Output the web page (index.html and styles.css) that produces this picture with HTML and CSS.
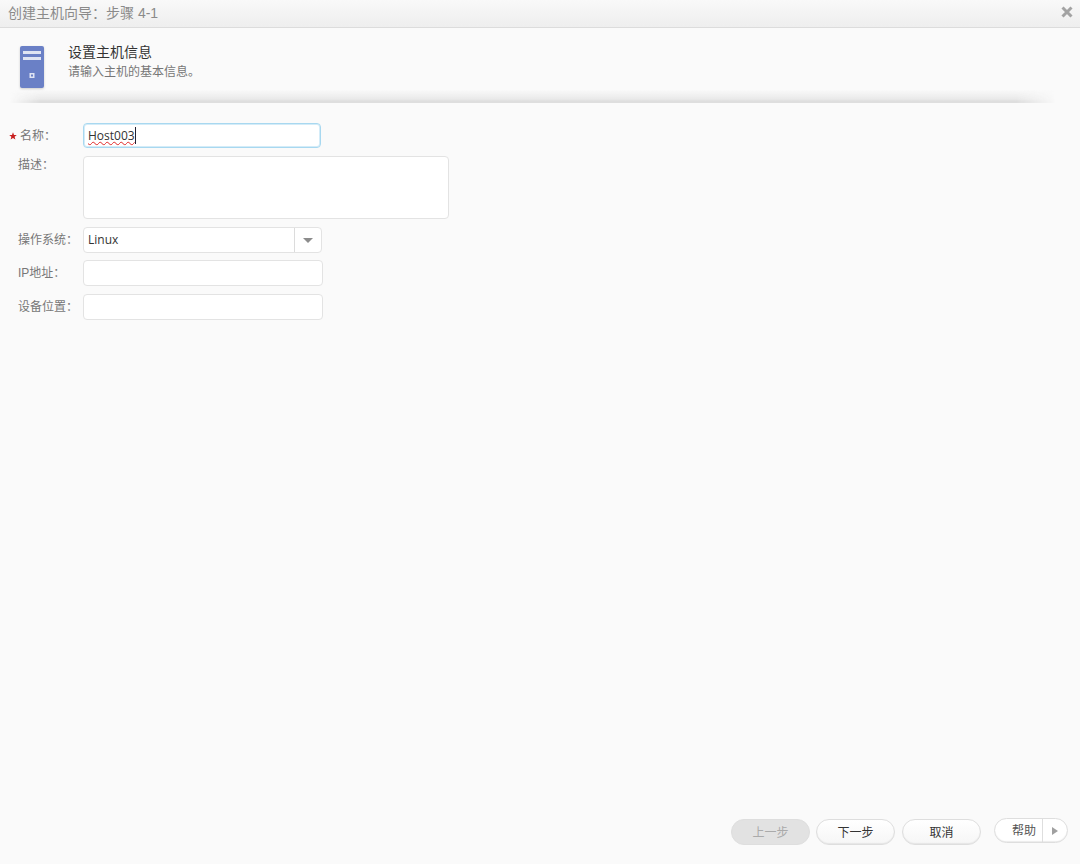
FILE: index.html
```html
<!DOCTYPE html>
<html lang="zh-CN">
<head>
<meta charset="utf-8">
<title>创建主机向导</title>
<link rel="stylesheet" href="styles.css">
</head>
<body>
<div class="dialog">
  <div class="titlebar">
    <span class="title-text">创建主机向导：步骤 4-1</span>
    <svg class="close" width="12" height="12" viewBox="0 0 12 12"><path d="M1.5 1.5L10.5 10.5M10.5 1.5L1.5 10.5" stroke="#a3a3a3" stroke-width="3"/></svg>
  </div>
  <div class="head">
    <svg class="host-icon" width="26" height="44" viewBox="0 0 26 44">
      <rect x="1" y="1" width="24" height="42" rx="2" fill="#6a80c6"/>
      <rect x="4" y="6" width="18" height="3" fill="#dfe4f3"/>
      <rect x="4" y="12" width="18" height="3" fill="#dfe4f3"/>
      <rect x="10.5" y="28" width="5" height="5" fill="#dfe4f3"/>
      <rect x="12" y="29.5" width="2" height="2" fill="#6a80c6"/>
    </svg>
    <div class="head-text">
      <div class="head-title">设置主机信息</div>
      <div class="head-sub">请输入主机的基本信息。</div>
    </div>
  </div>
  <div class="divider"></div>
  <form class="form">
    <div class="row row-name">
      <svg class="star" width="8" height="8" viewBox="0 0 8 8"><path d="M4 0.3L5 3H7.8L5.6 4.8L6.4 7.6L4 6L1.6 7.6L2.4 4.8L0.2 3H3Z" fill="#c81e1e"/></svg>
      <label class="label label-name">名称：</label>
      <div class="control control-name"><span class="misspelt">Host003</span><span class="caret"></span></div>
    </div>
    <div class="row row-desc">
      <label class="label">描述：</label>
      <div class="control control-desc"></div>
    </div>
    <div class="row row-os">
      <label class="label">操作系统：</label>
      <div class="control control-os">
        <span class="os-value">Linux</span>
        <span class="os-arrow"><span class="arrow-down"></span></span>
      </div>
    </div>
    <div class="row row-ip">
      <label class="label">IP地址：</label>
      <div class="control control-wide"></div>
    </div>
    <div class="row row-loc">
      <label class="label">设备位置：</label>
      <div class="control control-wide"></div>
    </div>
  </form>
  <div class="footer">
    <button type="button" class="btn btn-disabled">上一步</button>
    <button type="button" class="btn">下一步</button>
    <button type="button" class="btn">取消</button>
    <div class="help">
      <span class="help-label">帮助</span>
      <span class="help-more"><span class="arrow-right"></span></span>
    </div>
  </div>
</div>
</body>
</html>
```
FILE: styles.css
```css
* { box-sizing: border-box; }
html, body { margin: 0; padding: 0; }
body {
  width: 1080px;
  height: 864px;
  overflow: hidden;
  background: #fafafa;
  font-family: "Liberation Sans", "Noto Sans CJK SC", sans-serif;
  font-size: 12px;
  color: #666;
}
.dialog { height: 864px; display: flex; flex-direction: column; background: #fafafa; }
.titlebar {
  height: 28px;
  flex: none;
  display: flex;
  align-items: center;
  justify-content: space-between;
  padding: 0 7px 4px 8px;
  background: linear-gradient(#f9f9f9, #eeeeee);
  border-bottom: 1px solid #dcdcdc;
}
.title-text { font-size: 14px; color: #8a8a8a; }
.head { height: 62px; flex: none; display: flex; padding: 17px 0 0 19px; }
.host-icon { flex: none; filter: drop-shadow(0 1px 1px rgba(0,0,0,.18)); }
.head-text { margin-left: 23px; margin-top: -1px; }
.head-title { font-size: 14px; line-height: 16px; color: #333; }
.head-sub { font-size: 12px; line-height: 16px; margin-top: 4px; color: #777; }
.divider {
  height: 13px;
  flex: none;
  margin: 0 24px 0 10px;
  background: linear-gradient(rgba(222,222,222,0) 0%, #e9e9e9 70%, #dedede 85%, #dedede 100%);
  -webkit-mask-image: linear-gradient(90deg, transparent 0, #000 30px, #000 calc(100% - 40px), transparent 100%);
  mask-image: linear-gradient(90deg, transparent 0, #000 30px, #000 calc(100% - 40px), transparent 100%);
}
.form { flex: 1; padding: 20px 0 0 0; }
.row { display: flex; align-items: center; position: relative; padding-left: 18px; }
.row-name { height: 25px; margin-bottom: 8px; }
.row-desc { height: 63px; margin-bottom: 8px; align-items: flex-start; }
.row-desc .label { padding-top: 1px; }
.row-os { height: 26px; margin-bottom: 7px; }
.row-ip { height: 26px; margin-bottom: 8px; }
.row-loc { height: 26px; }
.star { position: absolute; left: 9px; top: 9px; }
.label { width: 65px; flex: none; font-size: 12px; color: #777; line-height: 16px; }
.label-name { padding-left: 2px; }
.control {
  background: #fff;
  border: 1px solid #e3e3e3;
  border-radius: 4px;
  color: #333;
  font-family: "Open Sans", "Liberation Sans", sans-serif;
  font-size: 12px;
}
.control-name {
  width: 238px;
  height: 25px;
  display: flex;
  align-items: center;
  padding: 0 0 1px 4px;
  border-color: #a8d8f0;
  box-shadow: inset 0 0 0 1px #d4ecf8;
}
.misspelt { text-decoration: underline wavy #e02828 1px; text-underline-offset: 1px; }
.caret { width: 1px; height: 17px; background: #223; }
.control-desc { width: 366px; height: 63px; }
.control-os {
  width: 239px;
  height: 26px;
  display: flex;
  align-items: center;
  justify-content: space-between;
}
.os-value { padding-left: 4px; padding-bottom: 1px; }
.os-arrow {
  width: 27px;
  height: 24px;
  border-left: 1px solid #dcdcdc;
  display: flex;
  align-items: center;
  justify-content: center;
}
.arrow-down { width: 0; height: 0; border: 5px solid transparent; border-top: 5px solid #8c8c8c; border-bottom: 0; }
.control-wide { width: 240px; height: 26px; }
.footer {
  flex: none;
  height: 45px;
  display: flex;
  align-items: flex-start;
  padding-left: 731px;
}
.btn {
  width: 79px;
  height: 26px;
  margin-right: 7px;
  padding: 0 0 1px;
  border: 1px solid #dedede;
  border-radius: 13px;
  background: linear-gradient(#ffffff, #f6f6f6);
  box-shadow: inset 0 -1px 1px #e6e6e6;
  font-family: inherit;
  font-size: 12px;
  color: #333;
}
.btn-disabled { background: #e2e2e2; color: #aaa; margin-right: 6px; box-shadow: none; }
.help {
  width: 74px;
  height: 25px;
  margin-left: 6px;
  margin-top: -1px;
  display: flex;
  border: 1px solid #dedede;
  border-radius: 13px;
  background: #fff;
  box-shadow: inset 0 -1px 1px #ececec;
}
.help-label { width: 47px; text-align: right; padding-right: 6px; line-height: 24px; color: #555; }
.help-more { flex: 1; border-left: 1px solid #dedede; display: flex; align-items: center; justify-content: center; }
.arrow-right { width: 0; height: 0; border: 4px solid transparent; border-left: 6px solid #a0a0a0; border-right: 0; }
```
